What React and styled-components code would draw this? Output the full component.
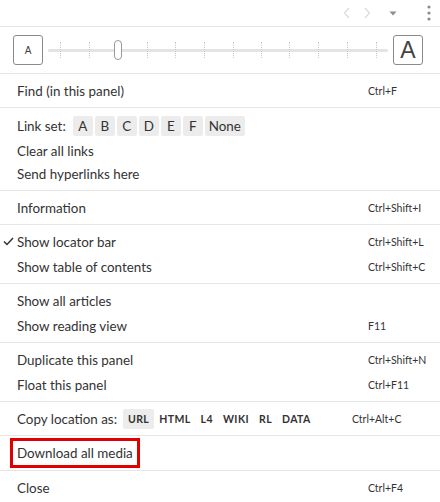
import React from 'react'
import styled, {createGlobalStyle} from 'styled-components'

const Global = createGlobalStyle`
  html, body {
    margin: 0;
    padding: 0;
    background: #fff;
  }
  body {
    font-family: Lato, "Liberation Sans", sans-serif;
    color: #333;
  }
`

const Panel = styled.div`
  width: 440px;
  height: 502px;
  overflow: hidden;
  background: #fff;
`

const TopBar = styled.div`
  display: flex;
  align-items: center;
  justify-content: flex-end;
  height: 26px;
  border-bottom: 1px solid #e6e6e6;
  padding-right: 9px;
`

const NavIcon = styled.svg`
  display: block;
  margin-left: ${props => props.gap || 0}px;
`

const ZoomRow = styled.div`
  display: flex;
  align-items: center;
  height: 46px;
  padding: 0 17px 0 13px;
  border-bottom: 1px solid #e6e6e6;
  gap: 5px;
`

const SizeBox = styled.div`
  width: 28px;
  height: 28px;
  border: 1px solid #8a8a8a;
  border-radius: 3px;
  display: flex;
  align-items: center;
  justify-content: center;
  font-family: "Liberation Sans", Arial, sans-serif;
  font-size: ${props => props.big ? '23px' : '10px'};
  color: #444;
  flex: none;
`

const Track = styled.div`
  flex: 1;
  position: relative;
  height: 20px;
  display: flex;
  align-items: center;
`

const TrackLine = styled.div`
  width: 100%;
  height: 3px;
  border-radius: 2px;
  background: #e4e4e4;
`

const Tick = styled.span`
  position: absolute;
  top: 2px;
  width: 0;
  height: 16px;
  border-left: 1px dotted #c8c8c8;
`

const Thumb = styled.span`
  position: absolute;
  top: 0;
  width: 6px;
  height: 18px;
  border: 1px solid #999;
  border-radius: 4px;
  background: #fff;
`

const Section = styled.div`
  padding: 4px 0;
  border-bottom: ${props => props.last ? 'none' : '1px solid #e6e6e6'};
`

const Row = styled.div`
  position: relative;
  display: flex;
  align-items: center;
  height: ${props => props.h || 25}px;
  padding-left: 17px;
  padding-right: 16px;
  font-size: 13.4px;
`

const Label = styled.span`
  flex: 1;
  white-space: nowrap;
  display: flex;
  align-items: center;
`

const Shortcut = styled.span`
  width: ${props => props.wide ? 72 : 56}px;
  font-size: 10.5px;
  white-space: nowrap;
  color: #333;
`

const Check = styled.svg`
  position: absolute;
  left: 3px;
  top: 8px;
`

const Chips = styled.span`
  display: inline-flex;
  gap: ${props => props.gap ?? 2}px;
  margin-left: ${props => props.offset || 7}px;
`

const Chip = styled.span`
  display: inline-flex;
  align-items: center;
  justify-content: center;
  min-width: ${props => props.small ? 'auto' : '20px'};
  height: 20px;
  padding: 0 ${props => props.small ? 5 : 2}px;
  border-radius: 2px;
  background: ${props => props.active ? '#ececec' : 'transparent'};
  font-size: ${props => props.small ? '10.5px' : '13.4px'};
  font-weight: ${props => props.small ? 700 : 400};
  letter-spacing: ${props => props.small ? '0.4px' : '0'};
  color: #333;
  box-sizing: border-box;
`

const Highlight = styled.span`
  display: inline-flex;
  align-items: center;
  height: 30px;
  margin-left: -7px;
  padding: 0 4px;
  border: 3px solid #e00000;
  box-sizing: border-box;
`

const ticks = [60, 89, 147, 175, 204, 233, 261, 289, 318, 347, 376]

function App() {
  return (
    <Panel>
      <Global />
      <TopBar>
        <NavIcon width="8" height="12" viewBox="0 0 8 12">
          <path d="M6 1 L1.5 6 L6 11" fill="none" stroke="#dcdcdc" strokeWidth="1.3" />
        </NavIcon>
        <NavIcon width="8" height="12" viewBox="0 0 8 12" gap={12}>
          <path d="M2 1 L6.5 6 L2 11" fill="none" stroke="#dcdcdc" strokeWidth="1.3" />
        </NavIcon>
        <NavIcon width="8" height="5" viewBox="0 0 8 5" gap={18}>
          <path d="M0.5 0.5 L7.5 0.5 L4 4.5 Z" fill="#8c8c8c" />
        </NavIcon>
        <NavIcon width="4" height="16" viewBox="0 0 4 16" gap={30}>
          <circle cx="2" cy="2" r="1.6" fill="#8c8c8c" />
          <circle cx="2" cy="8" r="1.6" fill="#8c8c8c" />
          <circle cx="2" cy="14" r="1.6" fill="#8c8c8c" />
        </NavIcon>
      </TopBar>

      <ZoomRow>
        <SizeBox>A</SizeBox>
        <Track>
          <TrackLine />
          {ticks.map(x => (
            <Tick key={x} style={{left: x - 48}} />
          ))}
          <Thumb style={{left: 114 - 48}} />
        </Track>
        <SizeBox big>A</SizeBox>
      </ZoomRow>

      <Section>
        <Row><Label>Find (in this panel)</Label><Shortcut>Ctrl+F</Shortcut></Row>
      </Section>

      <Section>
        <Row h={28}>
          <Label>
            Link set:
            <Chips>
              {['A', 'B', 'C', 'D', 'E', 'F'].map(l => <Chip key={l} active>{l}</Chip>)}
              <Chip active style={{padding: '0 4px'}}>None</Chip>
            </Chips>
          </Label>
        </Row>
        <Row h={21}><Label>Clear all links</Label></Row>
        <Row h={25}><Label>Send hyperlinks here</Label></Row>
      </Section>

      <Section>
        <Row><Label>Information</Label><Shortcut>Ctrl+Shift+I</Shortcut></Row>
      </Section>

      <Section>
        <Row>
          <Check width="11" height="9" viewBox="0 0 11 9">
            <path d="M1 4.5 L4 7.5 L10 1" fill="none" stroke="#333" strokeWidth="1.5" />
          </Check>
          <Label>Show locator bar</Label><Shortcut>Ctrl+Shift+L</Shortcut>
        </Row>
        <Row><Label>Show table of contents</Label><Shortcut>Ctrl+Shift+C</Shortcut></Row>
      </Section>

      <Section>
        <Row><Label>Show all articles</Label></Row>
        <Row><Label>Show reading view</Label><Shortcut>F11</Shortcut></Row>
      </Section>

      <Section>
        <Row><Label>Duplicate this panel</Label><Shortcut>Ctrl+Shift+N</Shortcut></Row>
        <Row><Label>Float this panel</Label><Shortcut>Ctrl+F11</Shortcut></Row>
      </Section>

      <Section>
        <Row>
          <Label>
            Copy location as:
            <Chips gap={0} offset={6}>
              <Chip small active>URL</Chip>
              <Chip small>HTML</Chip>
              <Chip small>L4</Chip>
              <Chip small>WIKI</Chip>
              <Chip small>RL</Chip>
              <Chip small>DATA</Chip>
            </Chips>
          </Label>
          <Shortcut wide>Ctrl+Alt+C</Shortcut>
        </Row>
      </Section>

      <Section>
        <Row h={26}><Label><Highlight>Download all media</Highlight></Label></Row>
      </Section>

      <Section last>
        <Row><Label>Close</Label><Shortcut>Ctrl+F4</Shortcut></Row>
      </Section>
    </Panel>
  )
}

export default App
